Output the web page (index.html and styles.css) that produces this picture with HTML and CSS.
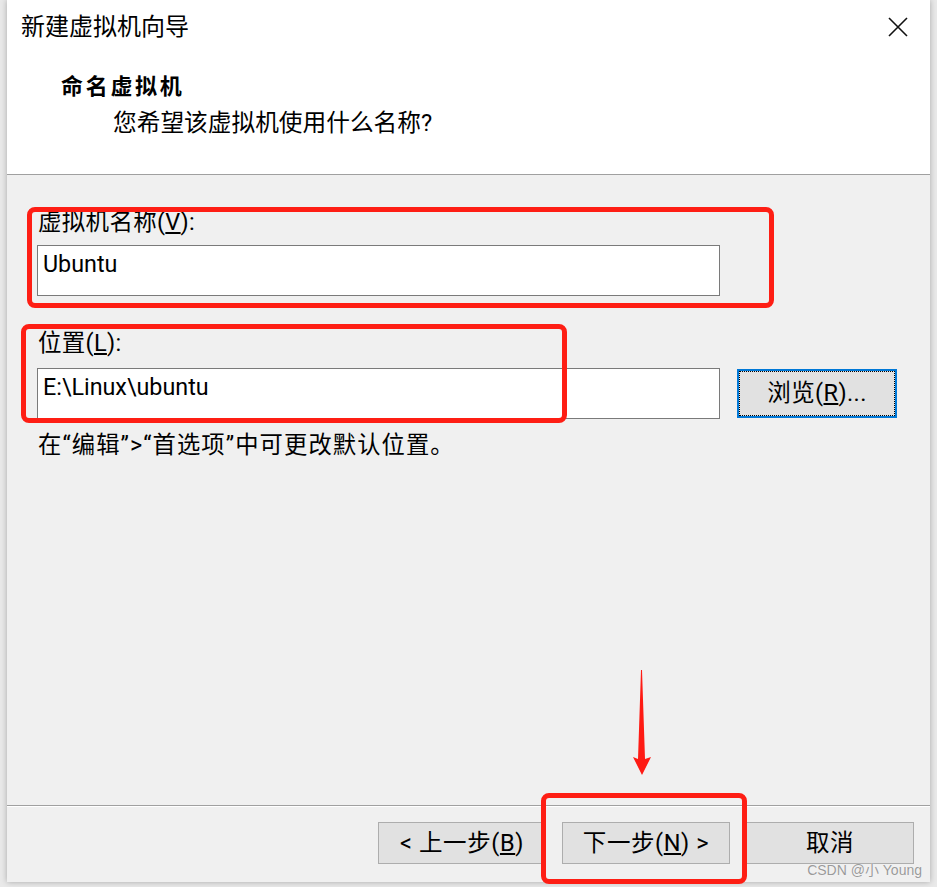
FILE: index.html
```html
<!DOCTYPE html>
<html lang="zh-CN">
<head>
<meta charset="utf-8">
<title>新建虚拟机向导</title>
<link rel="stylesheet" href="styles.css">
</head>
<body>
<div class="window">
  <div class="header">
    <div class="titlebar">
      <span class="title">新建虚拟机向导</span>
      <svg class="close" width="20" height="20" viewBox="0 0 20 20" aria-hidden="true">
        <path d="M1 1 L19 19 M19 1 L1 19" stroke="#111" stroke-width="1.6" fill="none"/>
      </svg>
    </div>
    <div class="heading">命名虚拟机</div>
    <div class="subtitle">您希望该虚拟机使用什么名称?</div>
  </div>

  <div class="content">
    <label class="field-label first">虚拟机名称(<u>V</u>):</label>
    <div class="textbox">Ubuntu</div>

    <label class="field-label second">位置(<u>L</u>):</label>
    <div class="row">
      <div class="textbox">E:\Linux\ubuntu</div>
      <button class="btn browse">浏览(<u>R</u>)...</button>
    </div>
    <div class="hint">在“编辑”&gt;“首选项”中可更改默认位置。</div>
  </div>

  <div class="footer">
    <button class="btn nav">&lt; 上一步(<u>B</u>)</button>
    <button class="btn nav">下一步(<u>N</u>) &gt;</button>
    <button class="btn nav">取消</button>
  </div>

  <div class="mark mark-name"></div>
  <div class="mark mark-loc"></div>
  <div class="mark mark-next"></div>
  <svg class="arrow" width="20" height="106" viewBox="0 0 20 106" aria-hidden="true">
    <polygon points="9,0 10,0 13,89 19,87 10,105 1,87 6,89" fill="#fe1b14"/>
  </svg>
  <div class="watermark">CSDN @小 Young</div>
</div>
</body>
</html>
```

FILE: styles.css
```css
html, body {
  margin: 0;
  padding: 0;
}

body {
  background: #e9e9e9;
  width: 937px;
  height: 887px;
  overflow: hidden;
  font-family: "Roboto", "Noto Sans CJK SC", sans-serif;
  color: #000;
}

.window {
  position: relative;
  margin-left: 7px;
  width: 923px;
  height: 882px;
  background: #f0f0f0;
  display: flex;
  flex-direction: column;
  box-shadow: 0 0 6px rgba(0, 0, 0, 0.28);
}

.header {
  height: 175px;
  box-sizing: border-box;
  background: #fff;
  border-bottom: 1px solid #a0a0a0;
  flex: none;
}

.titlebar {
  height: 54px;
  display: flex;
  align-items: center;
  justify-content: space-between;
  padding: 0 22px 0 14px;
}

.title {
  font-size: 24px;
  line-height: 54px;
}

.close {
  display: block;
}

.heading {
  margin-top: 17px;
  padding-left: 54px;
  font-size: 22px;
  font-weight: bold;
  letter-spacing: 2.7px;
  line-height: 32px;
}

.subtitle {
  margin-top: 4px;
  padding-left: 106px;
  font-size: 23.7px;
  line-height: 32px;
}

.content {
  flex: 1;
  padding: 32px 0 0 30px;
}

.field-label {
  display: block;
  padding-left: 1px;
  font-size: 23.5px;
  line-height: 30px;
  letter-spacing: 0.3px;
}

.field-label.first {
  margin-bottom: 8px;
}

.field-label.second {
  margin-top: 32px;
  margin-bottom: 10px;
}

.textbox {
  box-sizing: border-box;
  width: 683px;
  height: 51px;
  background: #fff;
  border: 1px solid #7a7a7a;
  padding: 2px 0 0 5px;
  font-size: 23.3px;
  line-height: 33px;
}

.row {
  display: flex;
  align-items: flex-start;
  gap: 17px;
}

.btn {
  box-sizing: border-box;
  background: #e1e1e1;
  border: 1px solid #adadad;
  font-family: "Roboto", "Noto Sans CJK SC", sans-serif;
  font-size: 23.5px;
  color: #000;
  padding: 0;
  margin: 0;
}

.browse {
  margin-top: 1px;
  width: 160px;
  height: 49px;
  border: 2px solid #0078d7;
  outline: 1px dotted #000;
  outline-offset: -3px;
  line-height: 43px;
  letter-spacing: 0.4px;
}

.hint {
  margin-top: 11px;
  padding-left: 1px;
  font-size: 23.3px;
  line-height: 30px;
  letter-spacing: 1.1px;
}

.footer {
  flex: none;
  height: 77px;
  box-sizing: border-box;
  border-top: 1px solid #a0a0a0;
  box-shadow: inset 0 1px 0 #fff;
  display: flex;
  justify-content: flex-end;
  align-items: flex-start;
  gap: 16px;
  padding: 16px 16px 0 0;
}

.nav {
  width: 168px;
  height: 42px;
  line-height: 40px;
  letter-spacing: 0.6px;
}

.mark {
  position: absolute;
  box-sizing: border-box;
  border: 5px solid #fe1e14;
  border-radius: 8px;
}

.mark-name {
  left: 20px;
  top: 207px;
  width: 747px;
  height: 101px;
}

.mark-loc {
  left: 14px;
  top: 324px;
  width: 546px;
  height: 99px;
}

.mark-next {
  left: 534px;
  top: 793px;
  width: 206px;
  height: 91px;
}

.arrow {
  position: absolute;
  left: 625px;
  top: 670px;
}

.watermark {
  position: absolute;
  right: 8px;
  top: 860px;
  font-family: "Liberation Sans", "Noto Sans CJK SC", sans-serif;
  font-size: 14px;
  line-height: 20px;
  color: #9a9a9a;
  text-shadow: 0 0 1px #fff;
}
```
